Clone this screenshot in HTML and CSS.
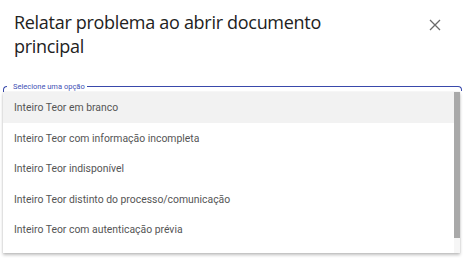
FILE: index.html
```html
<!DOCTYPE html>
<html lang="pt-BR">
<head>
    <meta charset="UTF-8">
    <meta name="viewport" content="width=device-width, initial-scale=1.0">
    <title>Relatar problema</title>
    <link rel="stylesheet" href="styles.css">
</head>
<body>
    <div class="dialog">
        <div class="dialog-header">
            <h2 class="dialog-title">Relatar problema ao abrir documento principal</h2>
            <button class="close-btn" aria-label="Fechar">
                <svg width="12" height="12" viewBox="0 0 12 12">
                    <path d="M1 1 L11 11 M11 1 L1 11" stroke="#6b6b6b" stroke-width="1.3" fill="none"/>
                </svg>
            </button>
        </div>

        <div class="field">
            <div class="field-outline">
                <span class="field-corner"></span>
                <span class="field-label">Selecione uma opção</span>
                <span class="field-line"></span>
            </div>

            <!-- Dropdown panel -->
            <div class="panel">
                <ul class="options">
                    <li class="option active">Inteiro Teor em branco</li>
                    <li class="option">Inteiro Teor com informação incompleta</li>
                    <li class="option">Inteiro Teor indisponível</li>
                    <li class="option">Inteiro Teor distinto do processo/comunicação</li>
                    <li class="option">Inteiro Teor com autenticação prévia</li>
                </ul>
                <div class="scrollbar"><div class="thumb"></div></div>
            </div>
        </div>
    </div>
</body>
</html>
```

FILE: styles.css
```css
body {
    margin: 0;
    background: #fff;
    font-family: 'Open Sans', 'Noto Sans', sans-serif;
    overflow: hidden;
}

.dialog {
    width: 465px;
    height: 274px;
}

.dialog-header {
    display: flex;
    justify-content: space-between;
    align-items: flex-start;
    padding: 10px 16px 0 14px;
    height: 81px;
    box-sizing: border-box;
}

.dialog-title {
    margin: 0;
    width: 340px;
    font-size: 18px;
    font-weight: 400;
    line-height: 24px;
    color: #222;
    letter-spacing: -0.3px;
}

.close-btn {
    border: none;
    background: none;
    padding: 0;
    margin: 9px 8px 0 0;
    width: 12px;
    height: 12px;
    cursor: pointer;
}

.close-btn svg {
    display: block;
}

.field {
    padding: 0 3px 0 3px;
}

.field-outline {
    display: flex;
    align-items: center;
    height: 11px;
}

.field-corner {
    width: 3px;
    height: 8px;
    margin-top: 8px;
    border-left: 1.5px solid #3949ab;
    border-top: 1.5px solid #3949ab;
    border-top-left-radius: 4px;
    margin-right: 6px;
}

.field-label {
    font-family: 'Roboto', sans-serif;
    font-size: 7.5px;
    color: #3f51b5;
    margin-right: 2px;
    white-space: nowrap;
}

.field-line {
    flex: 1;
    height: 4px;
    margin-top: 3px;
    border-top: 1.5px solid #3949ab;
    border-right: 1.5px solid #3949ab;
    border-top-right-radius: 4px;
}

.panel {
    position: relative;
    height: 161px;
    margin-right: 2px;
    background: #fff;
    box-shadow: 0 2px 3px rgba(0, 0, 0, 0.25), 0 0 1px rgba(0, 0, 0, 0.15);
    overflow: hidden;
}

.options {
    list-style: none;
    margin: 0;
    padding: 0;
    margin-right: 6px;
}

.option {
    height: 30.5px;
    line-height: 31px;
    padding-left: 11px;
    font-family: 'Roboto', sans-serif;
    font-size: 10.4px;
    color: #555;
}

.option.active {
    background: #f2f2f2;
}

.scrollbar {
    position: absolute;
    top: 0;
    right: 0;
    width: 6px;
    height: 100%;
    background: #f6f6f6;
}

.thumb {
    height: 146px;
    background: #a9a9a9;
}
```
